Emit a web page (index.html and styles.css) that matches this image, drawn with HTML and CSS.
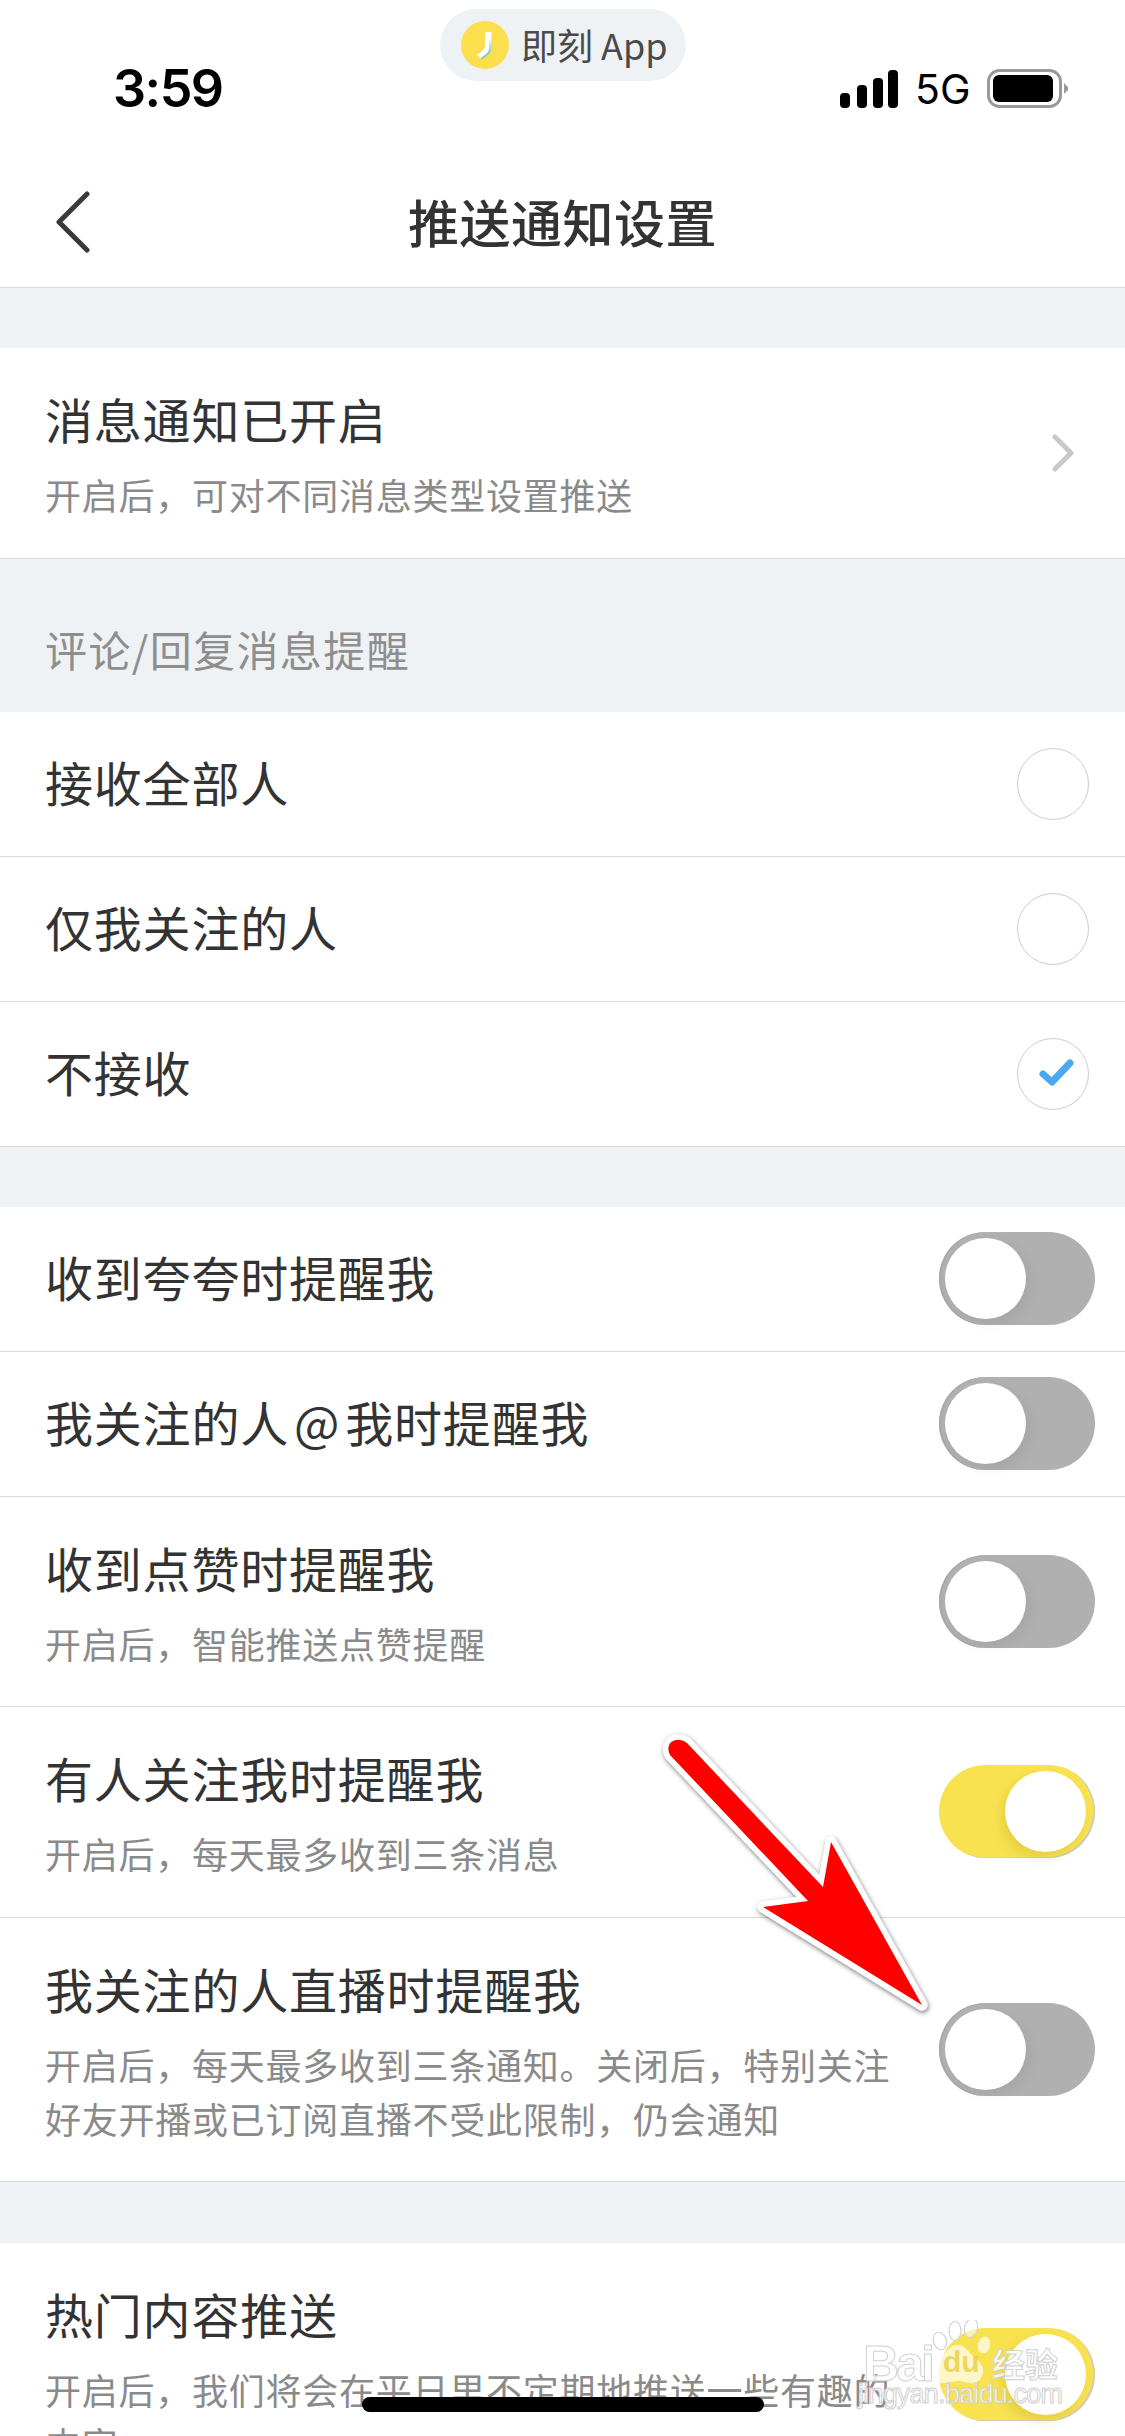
FILE: index.html
```html
<!DOCTYPE html>
<html lang="zh-CN">
<head>
    <meta charset="UTF-8">
    <meta name="viewport" content="width=device-width, initial-scale=1.0">
    <title>推送通知设置</title>
    <link rel="stylesheet" href="styles.css">
</head>
<body>
    <div class="phone">
        <div class="status-bar">
            <span class="time">3:59</span>
            <div class="app-pill">
                <svg class="app-logo" viewBox="0 0 48 48">
                    <defs>
                        <linearGradient id="jFade" x1="0" y1="0" x2="0.3" y2="1">
                            <stop offset="0.45" stop-color="#fff"/>
                            <stop offset="1" stop-color="#5dbce6"/>
                        </linearGradient>
                    </defs>
                    <circle cx="24" cy="24" r="24" fill="#fbdf4d"/>
                    <path d="M24 11h6.500v15c0 4-1.500 6-4 8l-5.500 4.500-1-1 6-6c1.500-1.500 2-3 2-5z" fill="url(#jFade)"/>
                    <path d="M24 11h4v15c0 3-1 5-3 7l-6 4-3-3 5-4c2-1.500 3-3 3-5z" fill="#fff"/>
                </svg>
                <span>即刻 App</span>
            </div>
            <div class="status-right">
                <svg class="signal" viewBox="0 0 58 38">
                    <rect x="0" y="23" width="10" height="15" rx="4"/>
                    <rect x="17" y="15" width="10" height="23" rx="4"/>
                    <rect x="33" y="8" width="10" height="30" rx="4"/>
                    <rect x="48" y="0" width="10" height="38" rx="4"/>
                </svg>
                <span class="net">5G</span>
                <svg class="battery" viewBox="0 0 81 39">
                    <rect x="1.500" y="1.500" width="72" height="36" rx="11" fill="none" stroke="#999" stroke-width="3"/>
                    <rect x="6" y="6" width="60" height="27" rx="6"/>
                    <path d="M77 14l4 4v3l-4 4z" fill="#999"/>
                </svg>
            </div>
        </div>

        <header class="nav-bar">
            <svg class="back" viewBox="0 0 36 62">
                <path d="M32 3L4 31l28 28" fill="none" stroke="#3a3a3a" stroke-width="5" stroke-linecap="round" stroke-linejoin="round"/>
            </svg>
            <h1>推送通知设置</h1>
        </header>

        <div class="gap"></div>
        <div class="row row-desc">
            <div class="row-text">
                <div class="row-title">消息通知已开启</div>
                <div class="row-sub">开启后，可对不同消息类型设置推送</div>
            </div>
            <svg class="chevron" viewBox="0 0 22 38">
                <path d="M3 3l16 16L3 35" fill="none" stroke="#c8c8c8" stroke-width="5" stroke-linecap="round" stroke-linejoin="round"/>
            </svg>
        </div>

        <div class="section-label">评论/回复消息提醒</div>
        <div class="row">
            <div class="row-text"><div class="row-title">接收全部人</div></div>
            <span class="radio"></span>
        </div>
        <div class="row">
            <div class="row-text"><div class="row-title">仅我关注的人</div></div>
            <span class="radio"></span>
        </div>
        <div class="row">
            <div class="row-text"><div class="row-title">不接收</div></div>
            <span class="radio">
                <svg viewBox="0 0 72 72">
                    <path d="M26 37l9 8 18-19" fill="none" stroke="#4aa8f0" stroke-width="7" stroke-linecap="round" stroke-linejoin="round"/>
                </svg>
            </span>
        </div>

        <div class="gap"></div>
        <div class="row">
            <div class="row-text"><div class="row-title">收到夸夸时提醒我</div></div>
            <span class="toggle"></span>
        </div>
        <div class="row">
            <div class="row-text"><div class="row-title">我关注的人<span class="at">@</span>我时提醒我</div></div>
            <span class="toggle"></span>
        </div>
        <div class="row row-desc">
            <div class="row-text">
                <div class="row-title">收到点赞时提醒我</div>
                <div class="row-sub">开启后，智能推送点赞提醒</div>
            </div>
            <span class="toggle"></span>
        </div>
        <div class="row row-desc">
            <div class="row-text">
                <div class="row-title">有人关注我时提醒我</div>
                <div class="row-sub">开启后，每天最多收到三条消息</div>
            </div>
            <span class="toggle on"></span>
        </div>
        <div class="row row-desc">
            <div class="row-text">
                <div class="row-title">我关注的人直播时提醒我</div>
                <div class="row-sub">开启后，每天最多收到三条通知。关闭后，特别关注好友开播或已订阅直播不受此限制，仍会通知</div>
            </div>
            <span class="toggle"></span>
        </div>

        <div class="gap gap-wide"></div>
        <div class="row row-desc">
            <div class="row-text">
                <div class="row-title">热门内容推送</div>
                <div class="row-sub">开启后，我们将会在平日里不定期地推送一些有趣的内容</div>
            </div>
            <span class="toggle on"></span>
        </div>

        <!-- annotation drawn on top of the screenshot -->
        <svg class="arrow" viewBox="640 1720 300 300">
            <defs>
                <filter id="arrowShadow" x="-10%" y="-10%" width="120%" height="120%">
                    <feDropShadow dx="1" dy="2" stdDeviation="2.500" flood-color="#000" flood-opacity="0.55"/>
                </filter>
            </defs>
            <g filter="url(#arrowShadow)">
                <path d="M687 1743L823 1887L831 1842L922 2005L763 1907L808 1901L670 1755C664 1743 676 1735 687 1743Z" fill="#f00" stroke="#fff" stroke-width="11" stroke-linejoin="round"/>
            </g>
            <path d="M687 1743L823 1887L831 1842L922 2005L763 1907L808 1901L670 1755C664 1743 676 1735 687 1743Z" fill="#f00"/>
        </svg>

        <div class="home-bar"></div>

        <svg class="watermark" viewBox="850 2320 230 110">
            <g fill="#fff" fill-opacity="0.55" stroke="#d2d2d2" stroke-width="1.200">
                <ellipse cx="940" cy="2341" rx="6.500" ry="9" transform="rotate(-20 940 2341)"/>
                <ellipse cx="955" cy="2331" rx="6" ry="9.500"/>
                <ellipse cx="971" cy="2328" rx="6.500" ry="9.500" transform="rotate(12 971 2328)"/>
            </g>
            <g fill="#fff" fill-opacity="0.7">
                <path d="M958 2345c6 0 9 5 14 10 7 6 11 10 11 16 0 8-6 13-14 12-5-1-7-2-11-2s-7 1-12 2c-8 1-13-4-13-12 0-6 3-10 8-14 6-5 8-12 17-12z"/>
                <ellipse cx="984" cy="2345" rx="6" ry="8.500" transform="rotate(15 984 2345)"/>
            </g>
            <text class="wm-du" x="943" y="2372">du</text>
            <text class="wm-big" x="863" y="2381" textLength="72">Bai</text>
            <text class="wm-cn" x="992" y="2377">经验</text>
            <text class="wm-url" x="858" y="2403" textLength="205">jingyan.baidu.com</text>
        </svg>
    </div>
</body>
</html>
```

FILE: styles.css
```css
* {
    box-sizing: border-box;
}
html, body {
    margin: 0;
    padding: 0;
}
body {
    font-family: "Noto Sans CJK SC", "Noto Sans", sans-serif;
    background-color: #eff2f5;
}
.phone {
    position: relative;
    width: 1125px;
    height: 2436px;
    overflow: hidden;
    background-color: #eff2f5;
}

/* status bar */
.status-bar {
    position: relative;
    height: 160px;
    background-color: #fff;
    display: flex;
    justify-content: space-between;
    align-items: flex-start;
    padding: 61px 57px 0 113px;
}
.time {
    font-family: Inter, "Liberation Sans", sans-serif;
    font-size: 52px;
    line-height: 56px;
    font-weight: 600;
    letter-spacing: -1.500px;
    color: #000;
}
.app-pill {
    position: absolute;
    left: 440px;
    top: 9px;
    width: 246px;
    height: 72px;
    border-radius: 36px;
    background-color: #eff2f5;
    display: flex;
    align-items: center;
    gap: 12px;
    padding: 0 0 3px 21px;
    font-size: 36px;
    color: #4a4a4a;
    white-space: nowrap;
}
.app-logo {
    width: 48px;
    height: 48px;
    flex: none;
    margin-top: 3px;
}
.status-right {
    display: flex;
    align-items: center;
    gap: 18px;
    height: 39px;
    margin-top: 8px;
}
.signal {
    width: 58px;
    height: 38px;
}
.net {
    width: 53px;
    margin-left: -1px;
    margin-right: 1px;
    font-family: Inter, "Liberation Sans", sans-serif;
    font-size: 41px;
    line-height: 38px;
    color: #000;
}
.battery {
    width: 81px;
    height: 39px;
}

/* nav */
.nav-bar {
    position: relative;
    height: 128px;
    padding-bottom: 5px;
    background-color: #fff;
    border-bottom: 1px solid #d9d9d9;
    display: flex;
    align-items: center;
    justify-content: center;
}
.nav-bar h1 {
    margin: 0;
    font-size: 51px;
    line-height: 60px;
    font-weight: 500;
    letter-spacing: 0.500px;
    color: #333;
}
.back {
    position: absolute;
    left: 55px;
    top: 31px;
    width: 36px;
    height: 62px;
}

/* list */
.gap {
    height: 60px;
}
.gap-wide {
    height: 61px;
}
.section-label {
    height: 153px;
    padding: 60px 0 0 45px;
    font-size: 42px;
    line-height: 60px;
    letter-spacing: 1.400px;
    color: #8e8e8e;
}
.row {
    display: flex;
    align-items: center;
    justify-content: space-between;
    min-height: 145px;
    padding: 0 30px 0 45px;
    background-color: #fff;
    border-bottom: 1px solid #d9d9d9;
}
.row-text {
    flex: 1;
    min-width: 0;
    padding-bottom: 6px;
}
.row-desc .row-text {
    padding-top: 40px;
    padding-bottom: 36.500px;
}
.row-title {
    font-size: 48px;
    line-height: 60px;
    letter-spacing: 0.800px;
    color: #333;
    white-space: nowrap;
}
.at {
    margin: 0 5px;
}
.row-sub {
    width: 856px;
    margin-top: 19px;
    font-size: 36px;
    line-height: 54px;
    letter-spacing: 0.750px;
    color: #8a8a8a;
}
.chevron {
    width: 22px;
    height: 38px;
    margin-right: 21px;
    flex: none;
}
.radio {
    width: 72px;
    height: 72px;
    flex: none;
    margin-right: 6px;
    border: 1.500px solid #ccc;
    border-radius: 50%;
    position: relative;
}
.radio svg {
    position: absolute;
    left: -1.500px;
    top: -1.500px;
    width: 72px;
    height: 72px;
}

/* switches */
.toggle {
    position: relative;
    flex: none;
    width: 156px;
    height: 93px;
    border-radius: 47px;
    background-color: #b0b0b0;
    box-shadow: inset 2px 0 0 #a8a8a8;
}
.toggle::after {
    content: "";
    position: absolute;
    left: 6px;
    top: 6px;
    width: 81px;
    height: 81px;
    border-radius: 50%;
    background-color: #fff;
    box-shadow: 5px 5px 12px rgba(0, 0, 0, 0.06);
}
.toggle.on {
    background-color: #f9e24f;
    box-shadow: inset -2px -1px 0 #cfcfc0;
}
.toggle.on::after {
    left: 66px;
    box-shadow: -4px 6px 12px rgba(150, 120, 0, 0.18);
}

/* overlays */
.arrow {
    position: absolute;
    left: 640px;
    top: 1720px;
    width: 300px;
    height: 300px;
    overflow: visible;
}
.home-bar {
    position: absolute;
    left: 362px;
    top: 2397px;
    width: 402px;
    height: 15px;
    border-radius: 8px;
    background-color: #000;
}
.watermark {
    position: absolute;
    left: 850px;
    top: 2320px;
    width: 230px;
    height: 110px;
}
.watermark text {
    fill: #fff;
    fill-opacity: 0.8;
    stroke: #d0d0d0;
    stroke-width: 1;
}
.watermark .wm-du {
    font-family: "Liberation Sans", sans-serif;
    font-size: 30px;
    font-weight: 700;
    fill: #e8d040;
    stroke: none;
}
.wm-big {
    font-family: "Liberation Sans", sans-serif;
    font-size: 50px;
    font-weight: 700;
}
.wm-cn {
    font-size: 33px;
    font-weight: 700;
}
.wm-url {
    font-family: "Liberation Sans", sans-serif;
    font-size: 27px;
}
```
